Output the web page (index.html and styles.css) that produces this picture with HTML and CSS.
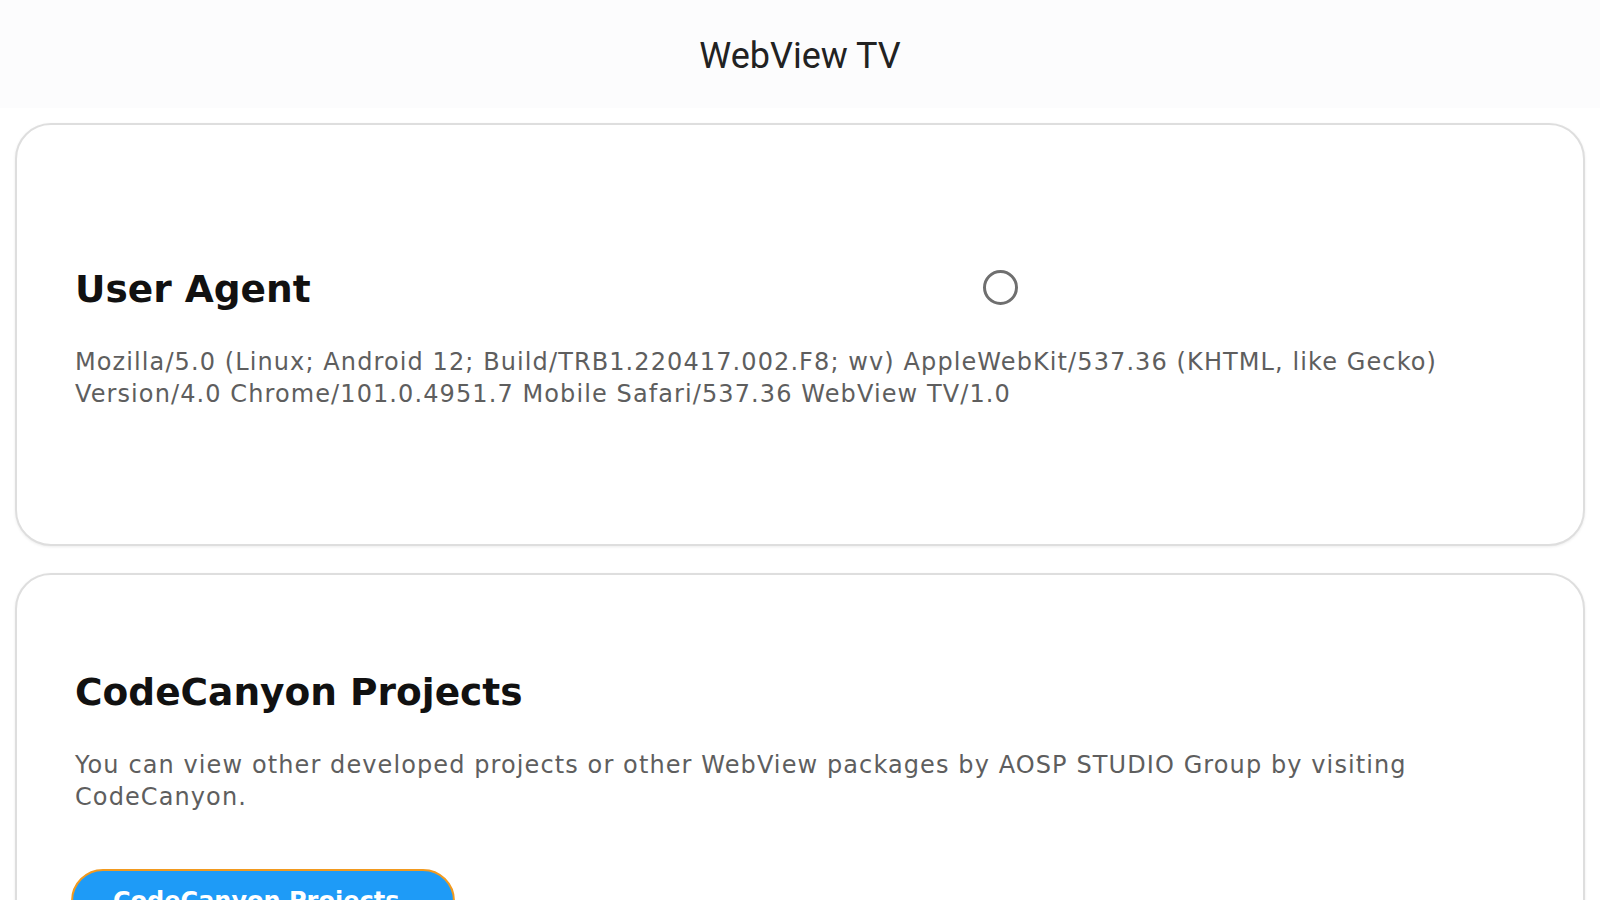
FILE: index.html
```html
<!DOCTYPE html>
<html>
<head>
<meta charset="utf-8">
<link rel="stylesheet" href="styles.css">
</head>
<body>
  <header class="topbar">
    <h1 class="topbar__title">WebView TV</h1>
  </header>

  <main class="page">
    <section class="card card_agent">
      <div class="card__head">
        <h2 class="card__title">User Agent</h2>
        <span class="spinner"></span>
      </div>
      <p class="card__text">Mozilla/5.0 (Linux; Android 12; Build/TRB1.220417.002.F8; wv) AppleWebKit/537.36 (KHTML, like Gecko) Version/4.0 Chrome/101.0.4951.7 Mobile Safari/537.36 WebView TV/1.0</p>
    </section>

    <section class="card card_projects">
      <h2 class="card__title">CodeCanyon Projects</h2>
      <p class="card__text">You can view other developed projects or other WebView packages by AOSP STUDIO Group by visiting CodeCanyon.</p>
      <button class="card__button">CodeCanyon Projects</button>
    </section>
  </main>
</body>
</html>
```

FILE: styles.css
```css
body {
    margin: 0;
    background: #fff;
    font-family: "DejaVu Sans", sans-serif;
    overflow: hidden;
}

.topbar {
    height: 108px;
    background: #fcfcfd;
    display: flex;
    align-items: center;
    justify-content: center;
}

.topbar__title {
    margin: 0;
    font-family: Roboto, sans-serif;
    font-weight: 400;
    font-size: 36px;
    color: #222;
    transform: translateY(2px);
}

.page {
    display: flex;
    flex-direction: column;
    gap: 27px;
    padding: 15px 15px 0;
}

.card {
    border: 2px solid #dedede;
    border-radius: 36px;
    box-shadow: 0 1px 3px rgba(0, 0, 0, 0.08);
    background: #fff;
}

.card_agent {
    box-sizing: border-box;
    height: 423px;
    padding: 6px 58px 0;
    display: flex;
    flex-direction: column;
    justify-content: center;
}

.card_projects {
    padding: 94px 58px 40px;
}

.card__head {
    display: flex;
    align-items: center;
}

.card__title {
    margin: 0;
    font-size: 37.5px;
    font-weight: 700;
    line-height: 46px;
    color: #111;
}

.spinner {
    width: 29px;
    height: 29px;
    border: 3px solid #6f6f6f;
    border-radius: 50%;
    margin-left: 672px;
    margin-top: -2px;
}

.card__text {
    margin: 34px 0 0;
    font-size: 24px;
    line-height: 32px;
    letter-spacing: 1.1px;
    color: #5e5e5e;
}

.card__button {
    margin-top: 56px;
    margin-left: -4px;
    width: 384px;
    height: 64px;
    padding: 0 0 0 40px;
    text-align: left;
    border: 2px solid #f29a1f;
    border-radius: 32px;
    background: #1e9bf7;
    color: #fff;
    font-family: "DejaVu Sans", sans-serif;
    font-size: 24px;
    font-weight: 600;
}
```
